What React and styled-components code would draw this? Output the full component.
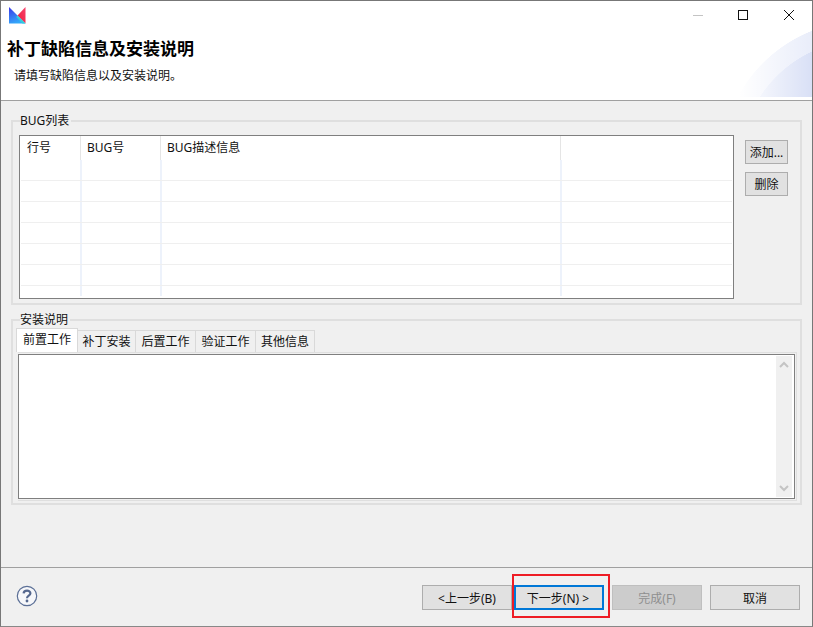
import React from 'react'
import styled, { createGlobalStyle } from 'styled-components';

const GlobalStyle = createGlobalStyle`
  html, body { margin: 0; padding: 0; background: #f0f0f0; }
  body { font-family: "Noto Sans", "Noto Sans CJK SC", sans-serif; font-size: 12px; color: #000; }
`;

const Window = styled.div`
  position: relative;
  box-sizing: border-box;
  width: 813px;
  height: 627px;
  border: 1px solid #777;
  border-bottom-color: #888;
  display: flex;
  flex-direction: column;
  background: #f0f0f0;
  overflow: hidden;
`;

const Header = styled.header`
  box-sizing: border-box;
  height: 100px;
  flex: none;
  background:
    linear-gradient(to right, #fff 738px, rgba(255, 255, 255, 0) 811px) no-repeat 0 0 / 100% 96px,
    radial-gradient(circle at 864px 164px, #d9e0f6 0, #d9e0f6 125px, #e9edfa 125.5px, #e9edfa 144px, rgba(255, 255, 255, 0) 144.5px) no-repeat 0 0 / 100% 96px,
    #fff;
  border-bottom: 1px solid #a0a0a0;
`;

const TitleBar = styled.div`
  height: 37px;
  padding: 6px 18px 0 8px;
  box-sizing: border-box;
  display: flex;
  justify-content: space-between;
`;

const Controls = styled.div`
  display: grid;
  grid-template-columns: 45px 46px 10px;
  align-items: start;
  padding-top: 3px;
`;

const Heading = styled.h1`
  margin: 0;
  padding-left: 6px;
  font-size: 17px;
  line-height: 22px;
  font-weight: 700;
  color: #000;
`;

const SubText = styled.p`
  margin: 7px 0 0;
  padding-left: 13px;
  font-size: 12px;
  line-height: 18px;
  color: #111;
`;

const Content = styled.main`
  flex: 1;
  padding: 12px 10px 0;
  display: flex;
  flex-direction: column;
  gap: 7px;
`;

const Group = styled.fieldset`
  box-sizing: border-box;
  margin: 0;
  height: ${p => p.$height}px;
  border: 2px solid #dfdfdf;
  padding: ${p => p.$padding};
  min-width: 0;
`;

const GroupTitle = styled.legend`
  margin-left: ${p => p.$indent}px;
  padding: 0 2px 0 0;
  font-size: 12px;
  line-height: 16px;
  color: #111;
`;

const BugRow = styled.div`
  display: flex;
  gap: 11px;
`;

const TableBox = styled.div`
  box-sizing: border-box;
  width: 715px;
  height: 164px;
  border: 1px solid #7f7f7f;
  background: #fff;
  overflow: hidden;
  padding: 0 1px;
`;

const HeadRow = styled.div`
  display: flex;
  height: 24px;
`;

const HeadCell = styled.div`
  box-sizing: border-box;
  width: ${p => p.$width}px;
  flex: none;
  padding: 3px 0 0 6px;
  line-height: 17px;
  border-right: 1px solid #e5e5e5;
  color: #111;
  &:last-child { border-right: 0; flex: 1; }
`;

const BodyRow = styled.div`
  display: flex;
  box-sizing: border-box;
  height: ${p => p.$height}px;
  border-bottom: ${p => (p.$last ? 0 : '1px solid #efefef')};
`;

const BodyCell = styled.div`
  box-sizing: border-box;
  width: ${p => p.$width}px;
  flex: none;
  border-right: 2px solid #edf2fb;
  &:last-child { border-right: 0; flex: 1; }
`;

const SideButtons = styled.div`
  display: flex;
  flex-direction: column;
  gap: 8px;
  padding-top: 5px;
`;

const Button = styled.button`
  box-sizing: border-box;
  width: ${p => p.$width}px;
  height: ${p => p.$h || 25}px;
  margin-left: ${p => p.$gap || 0}px;
  padding: ${p => (p.$focus ? '0 2px 0 0' : 0)};
  font: inherit;
  font-size: 12px;
  color: ${p => (p.disabled ? '#8f8f8f' : '#111')};
  background: ${p => (p.disabled ? '#cccccc' : '#e1e1e1')};
  border: ${p => (p.$focus ? '2px solid #0078d7' : `1px solid ${p.disabled ? '#bfbfbf' : '#adadad'}`)};
`;

const Tabs = styled.div`
  display: flex;
  align-items: flex-end;
  height: 24px;
  margin-left: -2px;
`;

const Tab = styled.div`
  box-sizing: border-box;
  height: ${p => (p.$active ? 24 : 22)}px;
  width: ${p => p.$width}px;
  text-align: center;
  line-height: 21px;
  color: #111;
  background: ${p => (p.$active ? '#fff' : '#f0f0f0')};
  border: 1px solid #d9d9d9;
  border-left: ${p => (p.$active ? '1px solid #d9d9d9' : 0)};
  border-bottom: 0;
`;

const EditorFrame = styled.div`
  box-sizing: border-box;
  height: 149px;
  border: 1px solid #dfdfdf;
  border-left: 0;
  margin-right: -1px;
`;

const Editor = styled.div`
  box-sizing: border-box;
  height: 145px;
  margin: 1px 1px 0 0;
  border: 1px solid #7f7f7f;
  background: #fff;
  display: flex;
  justify-content: flex-end;
  padding-right: 2px;
`;

const ScrollBar = styled.div`
  width: 16px;
  display: flex;
  flex-direction: column;
  justify-content: space-between;
  align-items: center;
  background: #f0f0f0;
  margin: 1px 0;
  padding: 5px 0;
  color: #c4c4c4;
`;

const Footer = styled.footer`
  flex: none;
  box-sizing: border-box;
  height: 59px;
  border-top: 1px solid #a0a0a0;
  display: flex;
  justify-content: space-between;
  padding: 17px 12px 0 15px;
`;

const FooterButtons = styled.div`
  display: flex;
  align-items: flex-start;
`;

const Annotation = styled.div`
  position: absolute;
  left: 511px;
  top: 573px;
  width: 98px;
  height: 44px;
  box-sizing: border-box;
  border: 2px solid #ee1c25;
  pointer-events: none;
`;

const Logo = () => (
  <svg width="17" height="17" viewBox="0 0 17 17">
    <defs>
      <linearGradient id="logoBlue" x1="0" y1="0" x2="0.4" y2="1">
        <stop offset="0" stopColor="#3a35e8" />
        <stop offset="1" stopColor="#34a9fa" />
      </linearGradient>
      <linearGradient id="logoPink" x1="1" y1="0" x2="0" y2="1">
        <stop offset="0" stopColor="#f7406a" />
        <stop offset="1" stopColor="#ee1f3c" />
      </linearGradient>
    </defs>
    <path d="M0 0 L16.5 16.5 L0 16.5 Z" fill="url(#logoBlue)" />
    <path d="M16.5 0 L8.5 8.5 L16.5 16.5 Z" fill="url(#logoPink)" />
    <path d="M8.5 8.5 L16.5 16.5 L13.5 16.5 L7.2 10 Z" fill="#2fd0dc" />
  </svg>
);

const HelpIcon = () => (
  <svg width="22" height="22" viewBox="0 0 22 22">
    <circle cx="11" cy="11" r="9.7" fill="#f6f7fa" stroke="#5b6f96" strokeWidth="1.2" />
    <path d="M7.6 8.4 C7.8 4.7 14.4 4.7 14.4 8.3 C14.4 10.7 11 10.6 11 13.2" fill="none" stroke="#55688f" strokeWidth="2.2" />
    <circle cx="11" cy="16" r="1.4" fill="#55688f" />
  </svg>
);

const columns = [61, 80, 400, 0];
const rowHeights = [21, 21, 21, 21, 21, 21, 10];
const tabs = [
  { label: '前置工作', width: 62, active: true },
  { label: '补丁安装', width: 58 },
  { label: '后置工作', width: 60 },
  { label: '验证工作', width: 60 },
  { label: '其他信息', width: 59 },
];

const App = () => {
  return (
    <Window>
      <GlobalStyle />
      <Header>
        <TitleBar>
          <Logo />
          <Controls>
            <svg width="10" height="10" viewBox="0 0 10 10"><path d="M0 5.5 H10" stroke="#c4c4c4" /></svg>
            <svg width="10" height="10" viewBox="0 0 10 10"><rect x="0.5" y="0.5" width="9" height="9" fill="none" stroke="#111" /></svg>
            <svg width="10" height="10" viewBox="0 0 10 10"><path d="M0 0 L10 10 M10 0 L0 10" stroke="#111" /></svg>
          </Controls>
        </TitleBar>
        <Heading>补丁缺陷信息及安装说明</Heading>
        <SubText>请填写缺陷信息以及安装说明。</SubText>
      </Header>

      <Content>
        <Group $height={192} $padding="6px 6px 0 6px">
          <GroupTitle $indent={1}>BUG列表</GroupTitle>
          <BugRow>
            <TableBox>
              <HeadRow>
                <HeadCell $width={60}>行号</HeadCell>
                <HeadCell $width={80}>BUG号</HeadCell>
                <HeadCell $width={400}>BUG描述信息</HeadCell>
                <HeadCell />
              </HeadRow>
              {rowHeights.map((h, i) => (
                <BodyRow key={i} $height={h} $last={i === rowHeights.length - 1}>
                  {columns.map((w, j) => <BodyCell key={j} $width={w} />)}
                </BodyRow>
              ))}
            </TableBox>
            <SideButtons>
              <Button $width={43} $h={24}>添加...</Button>
              <Button $width={43} $h={24}>删除</Button>
            </SideButtons>
          </BugRow>
        </Group>

        <Group $height={193} $padding="0 4px 0 5px">
          <GroupTitle $indent={2}>安装说明</GroupTitle>
          <Tabs>
            {tabs.map(t => (
              <Tab key={t.label} $width={t.width} $active={t.active}>{t.label}</Tab>
            ))}
          </Tabs>
          <EditorFrame>
            <Editor>
              <ScrollBar>
                <svg width="10" height="7" viewBox="0 0 10 7"><path d="M1 6 L5 2 L9 6" fill="none" stroke="currentColor" strokeWidth="2" /></svg>
                <svg width="10" height="7" viewBox="0 0 10 7"><path d="M1 1 L5 5 L9 1" fill="none" stroke="currentColor" strokeWidth="2" /></svg>
              </ScrollBar>
            </Editor>
          </EditorFrame>
        </Group>
      </Content>

      <Footer>
        <HelpIcon />
        <FooterButtons>
          <Button $width={90}>&lt;上一步(B)</Button>
          <Button $width={90} $gap={2} $focus>下一步(N)&nbsp;&gt;</Button>
          <Button $width={90} $gap={8} disabled>完成(F)</Button>
          <Button $width={90} $gap={8}>取消</Button>
        </FooterButtons>
      </Footer>
      <Annotation />
    </Window>
  )
}

export default App
